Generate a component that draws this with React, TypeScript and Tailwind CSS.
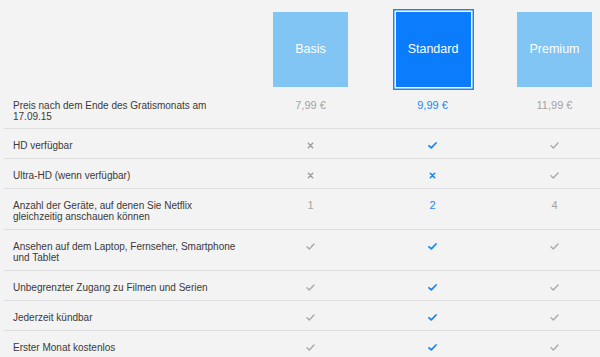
import React from "react";

type Cell = "yes" | "no" | string;

interface Row {
  label: string[];
  values: [Cell, Cell, Cell];
}

const rows: Row[] = [
  { label: ["HD verfügbar"], values: ["no", "yes", "yes"] },
  { label: ["Ultra-HD (wenn verfügbar)"], values: ["no", "no", "yes"] },
  {
    label: ["Anzahl der Geräte, auf denen Sie Netflix", "gleichzeitig anschauen können"],
    values: ["1", "2", "4"],
  },
  {
    label: ["Ansehen auf dem Laptop, Fernseher, Smartphone", "und Tablet"],
    values: ["yes", "yes", "yes"],
  },
  { label: ["Unbegrenzter Zugang zu Filmen und Serien"], values: ["yes", "yes", "yes"] },
  { label: ["Jederzeit kündbar"], values: ["yes", "yes", "yes"] },
  { label: ["Erster Monat kostenlos"], values: ["yes", "yes", "yes"] },
];

function Check({ active }: { active: boolean }) {
  return (
    <svg width="9" height="7" viewBox="0 0 9 7" className="block">
      <path
        d="M1 3.8 L3.3 5.9 L8 1"
        fill="none"
        stroke={active ? "#1b86f5" : "#a9a9a9"}
        strokeWidth={active ? 1.8 : 1.4}
        strokeLinecap="round"
        strokeLinejoin="round"
      />
    </svg>
  );
}

function Cross({ active }: { active: boolean }) {
  return (
    <svg width="7" height="7" viewBox="0 0 7 7" className="block">
      <path
        d="M1.3 1.3 L5.7 5.7 M5.7 1.3 L1.3 5.7"
        fill="none"
        stroke={active ? "#1b86f5" : "#9a9a9a"}
        strokeWidth={active ? 1.6 : 1.3}
        strokeLinecap="round"
      />
    </svg>
  );
}

function Value({ v, active }: { v: Cell; active: boolean }) {
  if (v === "yes")
    return (
      <div className="h-[11px] flex items-center justify-center">
        <Check active={active} />
      </div>
    );
  if (v === "no")
    return (
      <div className="h-[11px] flex items-center justify-center">
        <Cross active={active} />
      </div>
    );
  return (
    <div
      className={`text-center text-[11px] leading-[11px] ${
        active ? "text-[#1b86f5]" : "text-[#a3a3a3]"
      }`}
    >
      {v}
    </div>
  );
}

export default function App() {
  const grid = "grid grid-cols-[245.5px_122px_122px_122px]";
  return (
    <div
      className="w-[600px] h-[357px] overflow-hidden bg-[#f3f3f3] pl-1"
      style={{ fontFamily: '"Liberation Sans", Arial, sans-serif' }}
    >
      {/* plan header tiles */}
      <div className={`${grid} pt-[12px]`}>
        <div />
        <div className="flex justify-center">
          <div className="w-[75px] h-[75px] bg-[#80c5f4] flex items-center justify-center text-white text-[12.5px]">
            Basis
          </div>
        </div>
        <div className="flex justify-center pl-[1px]">
          <div className="w-[75px] h-[75px] bg-[#0b7dfc] flex items-center justify-center text-white text-[12.5px] shadow-[0_0_0_1.5px_#ffffff,0_0_0_3px_#1b86f5]">
            Standard
          </div>
        </div>
        <div className="flex justify-center">
          <div className="w-[75px] h-[75px] bg-[#80c5f4] flex items-center justify-center text-white text-[12.5px]">
            Premium
          </div>
        </div>
      </div>

      {/* price row */}
      <div className={`${grid} pt-[13px] pb-[6px] border-b border-[#dedede]`}>
        <div className="pl-[9px] text-[10px] leading-[11px] text-[#3a3a3a]">
          <div>Preis nach dem Ende des Gratismonats am</div>
          <div>17.09.15</div>
        </div>
        <div className="text-center text-[11px] leading-[11px] text-[#a3a3a3]">7,99 €</div>
        <div className="text-center text-[11px] leading-[11px] text-[#1b86f5]">9,99 €</div>
        <div className="text-center text-[11px] leading-[11px] text-[#a3a3a3]">11,99 €</div>
      </div>

      {rows.map((row, i) => (
        <div
          key={i}
          className={`${grid} pt-[11px] pb-[7px] border-b border-[#dedede]`}
        >
          <div className="pl-[9px] text-[10px] leading-[11px] text-[#3a3a3a]">
            {row.label.map((l, j) => (
              <div key={j}>{l}</div>
            ))}
          </div>
          {row.values.map((v, j) => (
            <Value key={j} v={v} active={j === 1} />
          ))}
        </div>
      ))}
    </div>
  );
}
